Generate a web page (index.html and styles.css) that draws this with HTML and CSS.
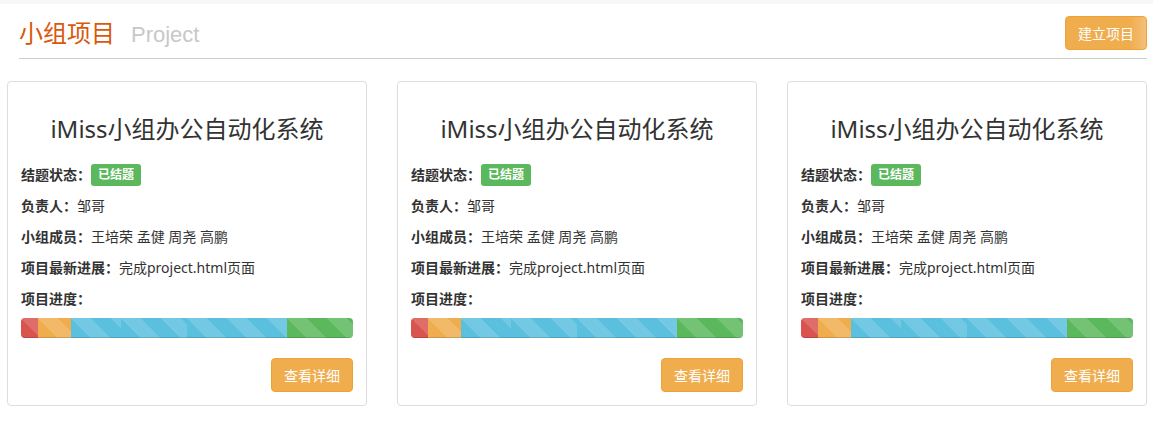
FILE: index.html
```html
<!DOCTYPE html>
<html lang="zh">
<head>
<meta charset="utf-8">
<title>小组项目</title>
<link rel="stylesheet" href="styles.css">
</head>
<body>
<div class="topband"></div>
<header class="page-header">
  <h1 class="page-title">小组项目<small class="page-sub">Project</small></h1>
  <button class="btn btn-create">建立项目</button>
</header>
<main class="cards">
  <section class="card">
    <h3 class="card-title">iMiss小组办公自动化系统</h3>
    <p class="row"><b>结题状态：</b><span class="badge">已结题</span></p>
    <p class="row"><b>负责人：</b>邹哥</p>
    <p class="row"><b>小组成员：</b>王培荣 孟健 周尧 高鹏</p>
    <p class="row"><b>项目最新进展：</b>完成project.html页面</p>
    <p class="row"><b>项目进度：</b></p>
    <div class="progress">
      <div class="bar danger" style="width:5%"></div>
      <div class="bar warning" style="width:10%"></div>
      <div class="bar info" style="width:15%"></div>
      <div class="bar info" style="width:20%"></div>
      <div class="bar info" style="width:30%"></div>
      <div class="bar success" style="width:20%"></div>
    </div>
    <div class="actions"><button class="btn btn-detail">查看详细</button></div>
  </section>
  <section class="card">
    <h3 class="card-title">iMiss小组办公自动化系统</h3>
    <p class="row"><b>结题状态：</b><span class="badge">已结题</span></p>
    <p class="row"><b>负责人：</b>邹哥</p>
    <p class="row"><b>小组成员：</b>王培荣 孟健 周尧 高鹏</p>
    <p class="row"><b>项目最新进展：</b>完成project.html页面</p>
    <p class="row"><b>项目进度：</b></p>
    <div class="progress">
      <div class="bar danger" style="width:5%"></div>
      <div class="bar warning" style="width:10%"></div>
      <div class="bar info" style="width:15%"></div>
      <div class="bar info" style="width:20%"></div>
      <div class="bar info" style="width:30%"></div>
      <div class="bar success" style="width:20%"></div>
    </div>
    <div class="actions"><button class="btn btn-detail">查看详细</button></div>
  </section>
  <section class="card">
    <h3 class="card-title">iMiss小组办公自动化系统</h3>
    <p class="row"><b>结题状态：</b><span class="badge">已结题</span></p>
    <p class="row"><b>负责人：</b>邹哥</p>
    <p class="row"><b>小组成员：</b>王培荣 孟健 周尧 高鹏</p>
    <p class="row"><b>项目最新进展：</b>完成project.html页面</p>
    <p class="row"><b>项目进度：</b></p>
    <div class="progress">
      <div class="bar danger" style="width:5%"></div>
      <div class="bar warning" style="width:10%"></div>
      <div class="bar info" style="width:15%"></div>
      <div class="bar info" style="width:20%"></div>
      <div class="bar info" style="width:30%"></div>
      <div class="bar success" style="width:20%"></div>
    </div>
    <div class="actions"><button class="btn btn-detail">查看详细</button></div>
  </section>
</main>
</body>
</html>
```
FILE: styles.css
```css
* { box-sizing: border-box; }
html, body { margin: 0; padding: 0; background: #fff; }
body {
  font-family: "Noto Sans", "Noto Sans CJK SC", sans-serif;
  font-size: 14px;
  color: #333;
}
.topband { height: 4px; background: #f7f7f7; }

.page-header {
  display: flex;
  justify-content: space-between;
  align-items: flex-start;
  height: 55px;
  margin: 0 6px 0 19px;
  padding: 12px 0 0;
  border-bottom: 1px solid #cccccc;
}
.page-title {
  display: flex;
  align-items: baseline;
  margin: 1px 0 0;
  height: 30px;
  font-weight: normal;
  font-size: 24px;
  line-height: 30px;
  color: #d9580c;
  font-family: "Noto Sans CJK SC", sans-serif;
}
.page-sub {
  font-family: "Liberation Sans", Arial, sans-serif;
  font-size: 22px;
  line-height: 30px;
  color: #c8c8c8;
  margin-left: 16px;
}
.btn {
  font-family: "Noto Sans CJK SC", sans-serif;
  font-size: 14px;
  line-height: 20px;
  padding: 6px 12px;
  color: #fff;
  border-radius: 4px;
  cursor: pointer;
}
.btn-create {
  height: 34px;
  width: 82px;
  border: 1px solid #eea236;
  background: linear-gradient(to right, #f0ad4e 0, #f0ad4e 80%, #f4c07a 100%);
}
.cards {
  display: flex;
  gap: 30px;
  padding-left: 7px;
  margin-top: 22px;
}
.card {
  width: 360px;
  border: 1px solid #dddddd;
  border-radius: 4px;
  padding: 13px 13px 13px;
}
.card-title {
  margin: 21px 0 22px;
  text-align: center;
  font-weight: normal;
  font-size: 24px;
  line-height: 26px;
  color: #333;
}
.row {
  margin: 0 0 10px;
  line-height: 21px;
  height: 21px;
  display: flex;
  align-items: center;
  white-space: nowrap;
}
.row b { font-weight: bold; }
.badge {
  display: inline-block;
  height: 22px;
  line-height: 22px;
  padding: 0 7px;
  background: #5cb85c;
  color: #fff;
  font-size: 12px;
  font-weight: bold;
  border-radius: 3px;
}
.progress {
  display: flex;
  height: 20px;
  margin: -1px 0 20px;
  background: #f5f5f5;
  border-radius: 4px;
  overflow: hidden;
  box-shadow: inset 0 1px 2px rgba(0,0,0,.1);
}
.bar {
  height: 100%;
  box-shadow: inset 0 -1px 0 rgba(0,0,0,.15);
  background-image: linear-gradient(45deg, rgba(255,255,255,.15) 25%, transparent 25%, transparent 50%, rgba(255,255,255,.15) 50%, rgba(255,255,255,.15) 75%, transparent 75%, transparent);
  background-size: 40px 40px;
}
.danger { background-color: #d9534f; }
.warning { background-color: #f0ad4e; }
.info { background-color: #5bc0de; }
.success { background-color: #5cb85c; }
.actions { display: flex; justify-content: flex-end; }
.btn-detail {
  width: 82px;
  height: 34px;
  border: 1px solid #eea236;
  background: #f0ad4e;
}
```
